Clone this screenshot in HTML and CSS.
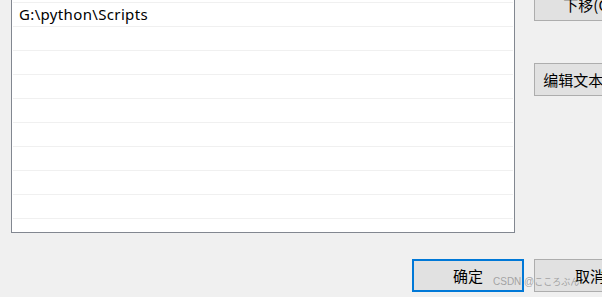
FILE: index.html
```html
<!DOCTYPE html>
<html>
<head>
<meta charset="utf-8">
<link rel="stylesheet" href="styles.css">
</head>
<body>
<div class="dialog">
  <div class="main">
    <div class="list">
      <div class="row"></div>
      <div class="row">G:\python\Scripts</div>
      <div class="row"></div>
      <div class="row"></div>
      <div class="row"></div>
      <div class="row"></div>
      <div class="row"></div>
      <div class="row"></div>
      <div class="row"></div>
      <div class="row"></div>
    </div>
    <div class="side">
      <button class="btn side-btn">下移(O)</button>
      <button class="btn side-btn edit">编辑文本(T)...</button>
    </div>
  </div>
  <div class="footer">
    <button class="btn default">确定</button>
    <button class="btn">取消</button>
  </div>
  <div class="watermark">CSDN @<span class="kana">こころぶん</span></div>
</div>
</body>
</html>
```
FILE: styles.css
```css
html, body {
  margin: 0;
  padding: 0;
}
body {
  width: 602px;
  height: 297px;
  overflow: hidden;
  background: #f0f0f0;
  font-family: "Noto Sans", "Noto Sans CJK SC", sans-serif;
  font-size: 15px;
  color: #000;
}
.dialog {
  position: relative;
  display: flow-root;
  width: 602px;
  height: 297px;
}
.main {
  display: flex;
  align-items: flex-start;
  padding-left: 11px;
  margin-top: -22px;
}
.list {
  box-sizing: border-box;
  width: 504px;
  height: 255px;
  border: 1px solid #828790;
  background: #fff;
  padding: 0 1px;
  flex: none;
}
.row {
  box-sizing: border-box;
  height: 24px;
  border-bottom: 1px solid #f0f0f0;
  padding-left: 6px;
  line-height: 23px;
  letter-spacing: 0.35px;
  white-space: nowrap;
}
.side {
  display: flex;
  flex-direction: column;
  margin-left: 19px;
  padding-top: 10px;
  flex: none;
}
.btn {
  box-sizing: border-box;
  flex: none;
  width: 112px;
  height: 33px;
  padding: 0;
  margin: 0;
  border: 1px solid #adadad;
  background: #e1e1e1;
  font-family: "Noto Sans CJK SC", "Noto Sans", sans-serif;
  font-size: 15px;
  color: #000;
  white-space: nowrap;
  text-align: center;
}
.side-btn {
  width: 110px;
}
.edit {
  margin-top: 42px;
}
.footer {
  display: flex;
  gap: 10px;
  padding-left: 412px;
  margin-top: 26px;
}
.default {
  border: 2px solid #0078d7;
}
.watermark {
  position: absolute;
  z-index: 2;
  left: 493px;
  top: 275px;
  font-family: "Liberation Sans", "Noto Sans CJK JP", sans-serif;
  font-size: 10px;
  line-height: 13px;
  color: rgba(150, 150, 150, 0.85);
  white-space: nowrap;
}
.kana {
  font-family: "Noto Sans CJK JP", sans-serif;
  font-size: 9px;
}
```
